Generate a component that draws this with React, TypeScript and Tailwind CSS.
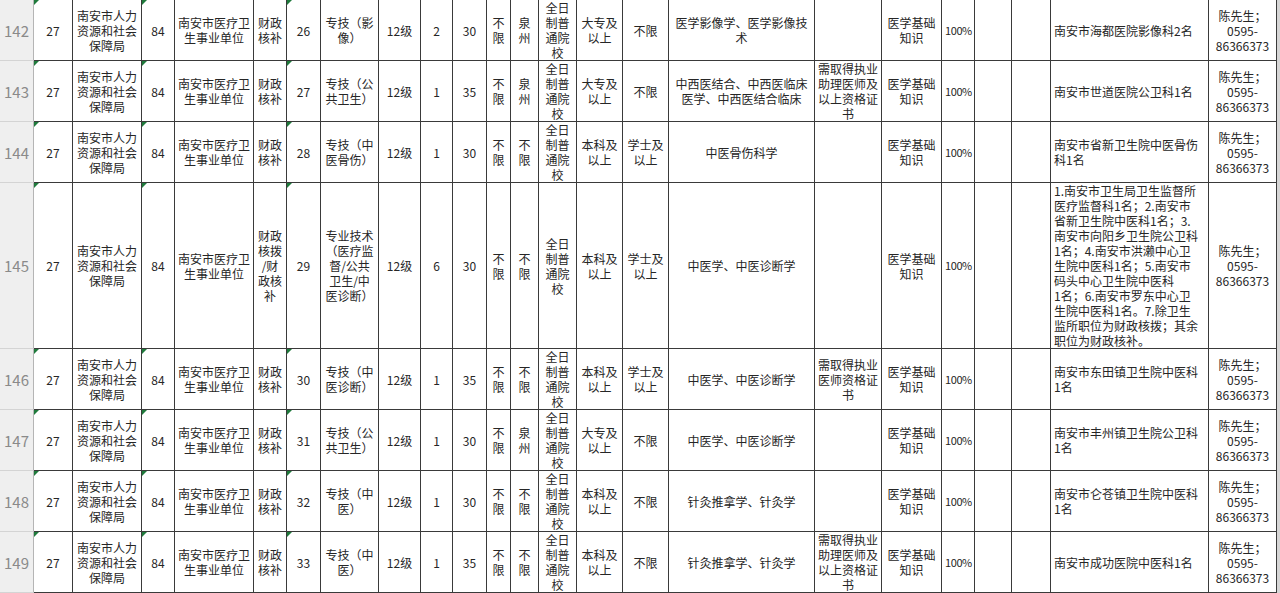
import React from 'react';

type Row = {
  no: number;
  height: string;
  fund: string;
  code: string;
  post: string;
  count: string;
  age: string;
  area: string;
  edu: string;
  degree: string;
  major: string;
  other: string;
  note: string[];
};

const rows: Row[] = [
  { no: 142, height: 'h-[61px]', fund: '财政核补', code: '26', post: '专技（影像）', count: '2', age: '30', area: '泉州', edu: '大专及以上', degree: '不限', major: '医学影像学、医学影像技术', other: '', note: ['南安市海都医院影像科2名'] },
  { no: 143, height: 'h-[61px]', fund: '财政核补', code: '27', post: '专技（公共卫生）', count: '1', age: '35', area: '泉州', edu: '大专及以上', degree: '不限', major: '中西医结合、中西医临床医学、中西医结合临床', other: '需取得执业助理医师及以上资格证书', note: ['南安市世道医院公卫科1名'] },
  { no: 144, height: 'h-[61px]', fund: '财政核补', code: '28', post: '专技（中医骨伤）', count: '1', age: '30', area: '不限', edu: '本科及以上', degree: '学士及以上', major: '中医骨伤科学', other: '', note: ['南安市省新卫生院中医骨伤', '科1名'] },
  {
    no: 145, height: 'h-[166px]', fund: '财政核拨/财政核补', code: '29', post: '专业技术（医疗监督/公共卫生/中医诊断）', count: '6', age: '30', area: '不限', edu: '本科及以上', degree: '学士及以上', major: '中医学、中医诊断学', other: '',
    note: [
      '1.南安市卫生局卫生监督所',
      '医疗监督科1名；2.南安市',
      '省新卫生院中医科1名；3.',
      '南安市向阳乡卫生院公卫科',
      '1名；4.南安市洪濑中心卫',
      '生院中医科1名；5.南安市',
      '码头中心卫生院中医科',
      '1名；6.南安市罗东中心卫',
      '生院中医科1名。7.除卫生',
      '监所职位为财政核拨；其余',
      '职位为财政核补。',
    ],
  },
  { no: 146, height: 'h-[61px]', fund: '财政核补', code: '30', post: '专技（中医诊断）', count: '1', age: '35', area: '不限', edu: '本科及以上', degree: '学士及以上', major: '中医学、中医诊断学', other: '需取得执业医师资格证书', note: ['南安市东田镇卫生院中医科', '1名'] },
  { no: 147, height: 'h-[61px]', fund: '财政核补', code: '31', post: '专技（公共卫生）', count: '1', age: '30', area: '泉州', edu: '大专及以上', degree: '不限', major: '中医学、中医诊断学', other: '', note: ['南安市丰州镇卫生院公卫科', '1名'] },
  { no: 148, height: 'h-[61px]', fund: '财政核补', code: '32', post: '专技（中医）', count: '1', age: '30', area: '不限', edu: '本科及以上', degree: '不限', major: '针灸推拿学、针灸学', other: '', note: ['南安市仑苍镇卫生院中医科', '1名'] },
  { no: 149, height: 'h-[61px]', fund: '财政核补', code: '33', post: '专技（中医）', count: '1', age: '35', area: '不限', edu: '本科及以上', degree: '不限', major: '针灸推拿学、针灸学', other: '需取得执业助理医师及以上资格证书', note: ['南安市成功医院中医科1名'] },
];

function Cell({
  children,
  flag = false,
  left = false,
  className = '',
}: {
  children?: React.ReactNode;
  flag?: boolean;
  left?: boolean;
  className?: string;
}) {
  return (
    <div
      className={`relative flex items-center overflow-hidden border-r border-b border-[#3a3a3a] px-[3px] ${
        left ? 'justify-start text-left' : 'justify-center text-center'
      } ${className}`}
    >
      {flag && (
        <span className="absolute top-0 left-0 h-0 w-0 border-t-[5px] border-r-[5px] border-t-[#1f7a3c] border-r-transparent" />
      )}
      <div className="min-w-0">{children}</div>
    </div>
  );
}

export default function App() {
  return (
    <div className="h-[593px] w-[1280px] overflow-hidden bg-[#d6d6d6] font-['Noto_Sans_CJK_SC',sans-serif] text-[12px] leading-[15px] text-[#262626]">
      <div className="w-[1277px] bg-white">
        {rows.map((r) => (
          <div
            key={r.no}
            className={`grid ${r.height} grid-cols-[34px_39px_69px_33px_79px_33px_34px_58px_42px_32px_34px_24px_28px_38px_46px_46px_146px_67px_60px_33px_37px_39px_158px_68px]`}
          >
            <div className="flex items-center justify-center border-r border-b border-r-[#b5b5b5] border-b-[#d4d4d4] bg-[#efefef] text-[15px] text-[#8a8a8a]">
              {r.no}
            </div>
            <Cell flag>27</Cell>
            <Cell>南安市人力资源和社会保障局</Cell>
            <Cell flag>84</Cell>
            <Cell>南安市医疗卫生事业单位</Cell>
            <Cell className="[line-break:anywhere]">{r.fund}</Cell>
            <Cell flag>{r.code}</Cell>
            <Cell>{r.post}</Cell>
            <Cell>12级</Cell>
            <Cell>{r.count}</Cell>
            <Cell>{r.age}</Cell>
            <Cell>不限</Cell>
            <Cell>{r.area}</Cell>
            <Cell>全日制普通院校</Cell>
            <Cell>{r.edu}</Cell>
            <Cell>{r.degree}</Cell>
            <Cell>{r.major}</Cell>
            <Cell>{r.other}</Cell>
            <Cell>医学基础知识</Cell>
            <Cell left className="text-[11px] tracking-[-0.4px]">
              100%
            </Cell>
            <Cell />
            <Cell />
            <Cell left>
              {r.note.map((line, i) => (
                <div key={i} className="whitespace-nowrap">
                  {line}
                </div>
              ))}
            </Cell>
            <Cell>陈先生；0595-86366373</Cell>
          </div>
        ))}
      </div>
    </div>
  );
}
